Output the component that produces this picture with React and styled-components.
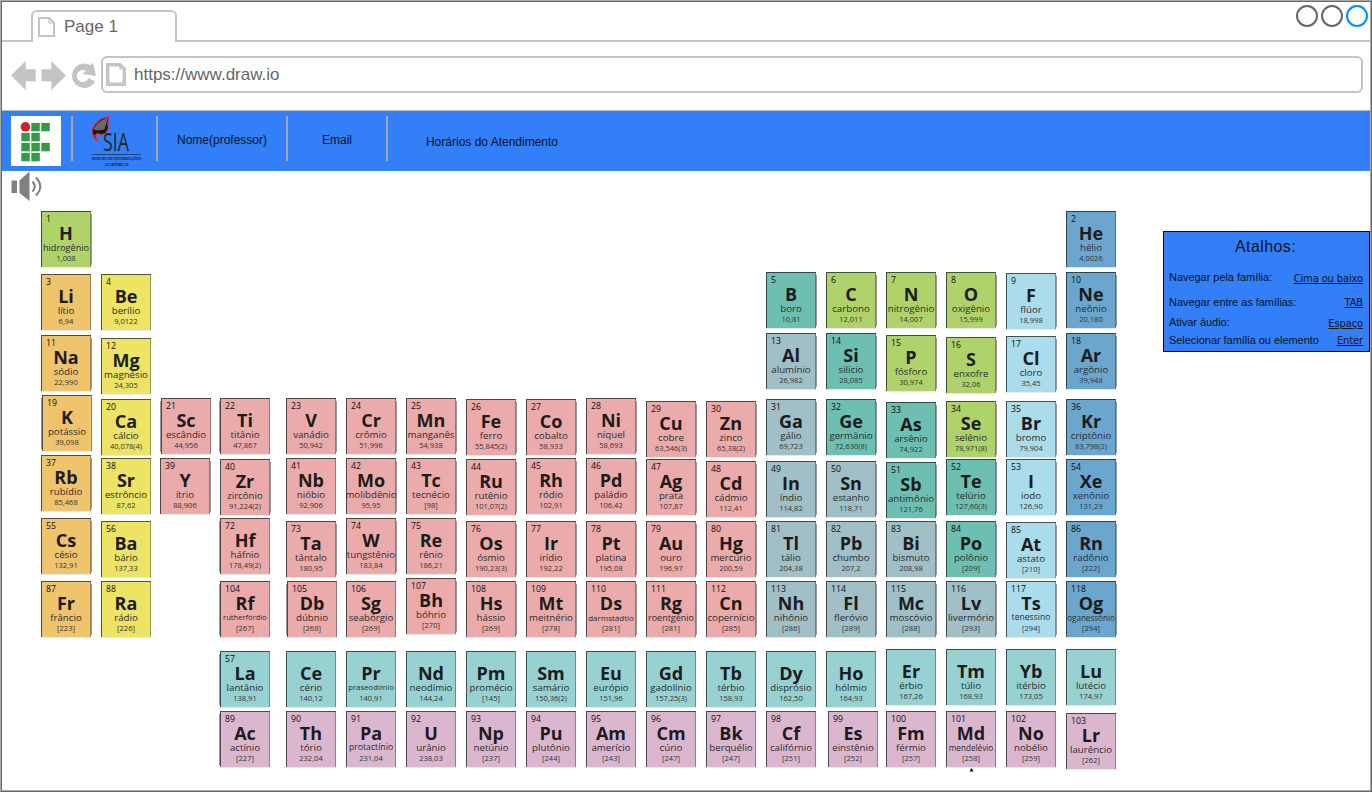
import React from "react";
import styled, { createGlobalStyle } from "styled-components";

const GlobalStyle = createGlobalStyle`
  * { box-sizing: border-box; }
  body { margin: 0; background: #fff; font-family: "Liberation Sans", Arial, sans-serif; }
`;

const line = "#c4c4c4";

const Window = styled.div`
  width: 1372px;
  height: 792px;
  overflow: hidden;
  background: #fff;
  border: 1px solid #a9a9a9;
  border-right-color: #666;
  border-bottom-color: #666;
`;

const Inner = styled.div`
  height: 790px;
  border: 1px solid #666;
  border-right-color: #a9a9a9;
  border-bottom-color: #a9a9a9;
`;

const TabStrip = styled.div`
  display: flex;
  justify-content: space-between;
  align-items: flex-end;
  height: 40px;
  padding-left: 29px;
  border-bottom: 2px solid ${line};
`;

const Tab = styled.div`
  display: flex;
  align-items: center;
  width: 146px;
  height: 32px;
  margin-bottom: -2px;
  padding: 0 0 0 5px;
  gap: 9px;
  background: #fff;
  border: 2px solid ${line};
  border-bottom: 0;
  border-radius: 6px 6px 0 0;
  color: #666;
  font-size: 17px;
`;

const WindowButtons = styled.div`
  display: flex;
  align-self: flex-start;
  gap: 3px;
  padding: 3px 2px 0 0;
`;

const RoundButton = styled.span`
  width: 22px;
  height: 22px;
  border: 2px solid ${(p) => p.$color};
  border-radius: 50%;
`;

const AddressRow = styled.div`
  display: flex;
  align-items: flex-start;
  height: 69px;
  padding: 14px 7px 0 9px;
  border-bottom: 1px solid #b4b8c0;
`;

const NavIcons = styled.svg`
  width: 86px;
  height: 38px;
  margin-right: 4px;
`;

const AddressField = styled.div`
  display: flex;
  align-items: center;
  flex: 1;
  height: 37px;
  padding: 0 0 0 3px;
  gap: 8px;
  border: 2px solid ${line};
  border-radius: 6px;
  color: #666;
  font-size: 17px;
`;

const Header = styled.header`
  display: flex;
  height: 60px;
  padding: 5px 0 0 9px;
  background: #337ff7;
`;

const Divider = styled.span`
  width: 2px;
  height: 45px;
  margin-left: ${(p) => p.$before}px;
  background: #a5a5ab;
`;

const HeaderLink = styled.span`
  width: ${(p) => p.$width}px;
  padding-top: ${(p) => p.$drop || 17}px;
  text-align: center;
  font-size: 12px;
  line-height: 14px;
  color: #0b1320;
`;

const SoundBar = styled.div`
  height: 40px;
  padding-left: 8px;
`;

const Content = styled.main`
  display: flex;
  align-items: flex-start;
  padding-left: 39px;
`;

const Family = styled.div`
  flex: none;
  display: flex;
  flex-direction: column;
  width: 50px;
  margin-left: ${(p) => p.$gap}px;
`;

const Cell = styled.div`
  position: relative;
  width: 50px;
  height: 56px;
  margin-top: ${(p) => p.$gap}px;
  margin-left: ${(p) => p.$shift}px;
  border: solid rgba(20, 30, 30, 0.72);
  border-width: 1px 0 0 1px;
  box-shadow: inset -1px 0 0 rgba(30, 40, 40, 0.4), 0 1px 0 rgba(0, 0, 0, 0.09);
  background: ${(p) => p.$color};
  color: #1c1c1c;
  font-family: "Open Sans", "Noto Sans", sans-serif;
  text-align: center;
  white-space: nowrap;

  &::after {
    content: "";
    display: ${(p) => (p.$back ? "block" : "none")};
    position: absolute;
    top: 2px;
    bottom: 2px;
    ${(p) => (p.$back === "left" ? "left: -2px;" : "right: -1px;")}
    width: 1px;
    background: #999;
  }
`;

const AtomicNumber = styled.div`
  height: 12px;
  padding: 2px 0 0 4px;
  text-align: left;
  font-size: 8.7px;
  line-height: 11px;
  font-weight: 500;
  color: #0c0c0c;
`;

const Symbol = styled.div`
  height: 18px;
  font-size: 18px;
  line-height: 18px;
  font-weight: 700;
  margin-left: -1px;
`;

const Name = styled.div`
  display: flex;
  justify-content: center;
  height: 11px;
  margin: 0 -4px 0 -5px;
  font-size: ${(p) => p.$size}px;
  line-height: 11px;
  color: #2a2e2e;
`;

const Mass = styled.div`
  margin-left: -1px;
  font-size: 7.5px;
  line-height: 10px;
  color: #303434;
`;

const Mark = styled.svg`
  width: 5px;
  height: 4px;
  margin: 1px auto 0 23px;
`;

const Shortcuts = styled.aside`
  flex: none;
  width: 207px;
  height: 121px;
  margin: 20px 0 0 47px;
  padding: 5px 6px 0 5px;
  border: 1px solid #000;
  background: #337ff7;
  color: #0b1320;
`;

const ShortcutsTitle = styled.h2`
  margin: 0 0 15px;
  padding-right: 1px;
  font-size: 16px;
  font-weight: 400;
  line-height: 19px;
  letter-spacing: 0.4px;
  text-align: center;
`;

const Shortcut = styled.div`
  display: flex;
  justify-content: space-between;
  height: ${(p) => p.$height}px;
  font-size: 11px;
  line-height: 13px;
  letter-spacing: -0.04px;
  white-space: nowrap;
`;

const Key = styled.span`
  padding-top: ${(p) => p.$drop}px;
  font-family: "DejaVu Sans Condensed", "DejaVu Sans", sans-serif;
  font-stretch: condensed;
  font-size: 11px;
  letter-spacing: -0.1px;
  text-decoration: underline;
`;

const SiaMark = styled.svg`
  width: 52px;
  height: 52px;
  margin-left: 18px;
  overflow: visible;
`;

const colors = {
  g: "#afd26b", o: "#efc46c", y: "#ede466", p: "#ebabab", t: "#6dbfb2",
  a: "#a1bfc6", l: "#aadceb", b: "#6ba6cf", c: "#98d1d2", m: "#dbb7cf",
};

// Element: colour, top, number, symbol, name, mass, options
const families = [
  { x: 41, items: [
    ["g", 211, 1, "H", "hidrogênio", "1,008", { size: 9.1, back: "right" }],
    ["o", 274, 3, "Li", "lítio", "6,94"],
    ["o", 335, 11, "Na", "sódio", "22,990", { back: "right" }],
    ["o", 395, 19, "K", "potássio", "39,098", { shift: 1, back: "left" }],
    ["o", 455, 37, "Rb", "rubídio", "85,468", { back: "right" }],
    ["o", 518, 55, "Cs", "césio", "132,91", { back: "right" }],
    ["o", 581, 87, "Fr", "frâncio", "[223]", { back: "right" }]] },
  { x: 101, items: [
    ["y", 274, 4, "Be", "berílio", "9,0122"],
    ["y", 338, 12, "Mg", "magnésio", "24,305"],
    ["y", 399, 20, "Ca", "cálcio", "40,078(4)"],
    ["y", 458, 38, "Sr", "estrôncio", "87,62"],
    ["y", 521, 56, "Ba", "bário", "137,33"],
    ["y", 581, 88, "Ra", "rádio", "[226]"]] },
  { x: 160, items: [
    ["p", 398, 21, "Sc", "escândio", "44,956", { shift: 1, back: "left" }],
    ["p", 458, 39, "Y", "ítrio", "88,906", { back: "right" }]] },
  { x: 219, items: [
    ["p", 398, 22, "Ti", "titânio", "47,867", { shift: 1, back: "left" }],
    ["p", 459, 40, "Zr", "zircônio", "91,224(2)", { shift: 1, back: "right" }],
    ["p", 518, 72, "Hf", "háfnio", "178,49(2)", { shift: 1, back: "left" }],
    ["p", 581, 104, "Rf", "rutherfórdio", "[267]", { shift: 1, size: 7.6, back: "left" }],
    ["c", 651, 57, "La", "lantânio", "138,91", { shift: 1, back: "left" }],
    ["m", 711, 89, "Ac", "actínio", "[227]", { shift: 1, back: "left" }]] },
  { x: 286, items: [
    ["p", 398, 23, "V", "vanádio", "50,942", { back: "right" }],
    ["p", 458, 41, "Nb", "nióbio", "92,906"],
    ["p", 521, 73, "Ta", "tântalo", "180,95", { back: "right" }],
    ["p", 581, 105, "Db", "dúbnio", "[268]", { shift: 1, back: "left" }],
    ["c", 651, "", "Ce", "cério", "140,12"],
    ["m", 711, 90, "Th", "tório", "232,04"]] },
  { x: 346, items: [
    ["p", 398, 24, "Cr", "crômio", "51,996", { back: "right" }],
    ["p", 458, 42, "Mo", "molibdênio", "95,95", { back: "right" }],
    ["p", 518, 74, "W", "tungstênio", "183,84", { back: "right" }],
    ["p", 581, 106, "Sg", "seabórgio", "[269]"],
    ["c", 651, "", "Pr", "praseodímio", "140,91", { size: 7.8 }],
    ["m", 711, 91, "Pa", "protactínio", "231,04", { size: 8.7 }]] },
  { x: 406, items: [
    ["p", 398, 25, "Mn", "manganês", "54,938", { back: "right" }],
    ["p", 458, 43, "Tc", "tecnécio", "[98]", { back: "right" }],
    ["p", 518, 75, "Re", "rênio", "186,21", { back: "right" }],
    ["p", 578, 107, "Bh", "bóhrio", "[270]", { back: "right" }],
    ["c", 651, "", "Nd", "neodímio", "144,24"],
    ["m", 711, 92, "U", "urânio", "238,03"]] },
  { x: 466, items: [
    ["p", 399, 26, "Fe", "ferro", "55,845(2)", { back: "right" }],
    ["p", 459, 44, "Ru", "rutênio", "101,07(2)", { back: "right" }],
    ["p", 521, 76, "Os", "ósmio", "190,23(3)", { back: "right" }],
    ["p", 581, 108, "Hs", "hássio", "[269]", { back: "right" }],
    ["c", 651, "", "Pm", "promécio", "[145]"],
    ["m", 711, 93, "Np", "netúnio", "[237]"]] },
  { x: 526, items: [
    ["p", 399, 27, "Co", "cobalto", "58,933", { back: "right" }],
    ["p", 458, 45, "Rh", "ródio", "102,91", { back: "right" }],
    ["p", 521, 77, "Ir", "irídio", "192,22", { back: "right" }],
    ["p", 581, 109, "Mt", "meitnério", "[278]", { back: "right" }],
    ["c", 651, "", "Sm", "samário", "150,36(2)"],
    ["m", 711, 94, "Pu", "plutônio", "[244]"]] },
  { x: 586, items: [
    ["p", 398, 28, "Ni", "níquel", "58,693", { back: "right" }],
    ["p", 458, 46, "Pd", "paládio", "106,42", { back: "right" }],
    ["p", 521, 78, "Pt", "platina", "195,08", { back: "right" }],
    ["p", 581, 110, "Ds", "darmstádtio", "[281]", { size: 8, back: "right" }],
    ["c", 651, "", "Eu", "európio", "151,96"],
    ["m", 711, 95, "Am", "amerício", "[243]"]] },
  { x: 646, items: [
    ["p", 401, 29, "Cu", "cobre", "63,546(3)", { back: "right" }],
    ["p", 459, 47, "Ag", "prata", "107,87", { back: "right" }],
    ["p", 521, 79, "Au", "ouro", "196,97", { back: "right" }],
    ["p", 581, 111, "Rg", "roentgênio", "[281]", { size: 9, back: "right" }],
    ["c", 651, "", "Gd", "gadolínio", "157,25(3)"],
    ["m", 711, 96, "Cm", "cúrio", "[247]"]] },
  { x: 706, items: [
    ["p", 401, 30, "Zn", "zinco", "65,38(2)", { back: "right" }],
    ["p", 461, 48, "Cd", "cádmio", "112,41", { back: "right" }],
    ["p", 521, 80, "Hg", "mercúrio", "200,59", { back: "right" }],
    ["p", 581, 112, "Cn", "copernício", "[285]", { back: "right" }],
    ["c", 651, "", "Tb", "térbio", "158,93"],
    ["m", 711, 97, "Bk", "berquélio", "[247]"]] },
  { x: 766, items: [
    ["t", 272, 5, "B", "boro", "10,81", { back: "right" }],
    ["a", 333, 13, "Al", "alumínio", "26,982", { back: "right" }],
    ["a", 399, 31, "Ga", "gálio", "69,723", { back: "right" }],
    ["a", 461, 49, "In", "índio", "114,82", { back: "right" }],
    ["a", 521, 81, "Tl", "tálio", "204,38", { back: "right" }],
    ["a", 581, 113, "Nh", "nihônio", "[286]", { back: "right" }],
    ["c", 651, "", "Dy", "disprósio", "162,50"],
    ["m", 711, 98, "Cf", "califórnio", "[251]"]] },
  { x: 826, items: [
    ["g", 272, 6, "C", "carbono", "12,011", { back: "right" }],
    ["t", 333, 14, "Si", "silício", "28,085", { back: "right" }],
    ["t", 399, 32, "Ge", "germânio", "72,630(8)", { back: "right" }],
    ["a", 461, 50, "Sn", "estanho", "118,71", { back: "right" }],
    ["a", 521, 82, "Pb", "chumbo", "207,2", { back: "right" }],
    ["a", 581, 114, "Fl", "fleróvio", "[289]", { back: "right" }],
    ["c", 651, "", "Ho", "hólmio", "164,93"],
    ["m", 711, 99, "Es", "einstênio", "[252]", { shift: 2 }]] },
  { x: 886, items: [
    ["g", 272, 7, "N", "nitrogênio", "14,007", { back: "right" }],
    ["g", 335, 15, "P", "fósforo", "30,974", { back: "right" }],
    ["t", 402, 33, "As", "arsênio", "74,922", { back: "right" }],
    ["t", 462, 51, "Sb", "antimônio", "121,76", { back: "right" }],
    ["a", 521, 83, "Bi", "bismuto", "208,98", { back: "right" }],
    ["a", 581, 115, "Mc", "moscóvio", "[288]", { back: "right" }],
    ["c", 649, "", "Er", "érbio", "167,26"],
    ["m", 711, 100, "Fm", "férmio", "[257]"]] },
  { x: 946, items: [
    ["g", 272, 8, "O", "oxigênio", "15,999", { back: "right" }],
    ["g", 337, 16, "S", "enxofre", "32,06", { back: "right" }],
    ["g", 401, 34, "Se", "selênio", "78,971(8)", { back: "right" }],
    ["t", 459, 52, "Te", "telúrio", "127,60(3)", { back: "right" }],
    ["t", 521, 84, "Po", "polônio", "[209]", { back: "right" }],
    ["a", 581, 116, "Lv", "livermório", "[293]", { back: "right" }],
    ["c", 649, "", "Tm", "túlio", "168,93"],
    ["m", 711, 101, "Md", "mendelévio", "[258]", { size: 8.2 }]] },
  { x: 1006, items: [
    ["l", 273, 9, "F", "flúor", "18,998", { back: "right" }],
    ["l", 336, 17, "Cl", "cloro", "35,45", { back: "right" }],
    ["l", 401, 35, "Br", "bromo", "79,904", { back: "right" }],
    ["l", 459, 53, "I", "iodo", "126,90", { back: "right" }],
    ["l", 522, 85, "At", "astato", "[210]", { back: "right" }],
    ["l", 581, 117, "Ts", "tenessino", "[294]", { size: 8.6, back: "right" }],
    ["c", 649, "", "Yb", "itérbio", "173,05"],
    ["m", 711, 102, "No", "nobélio", "[259]"]] },
  { x: 1066, items: [
    ["b", 211, 2, "He", "hélio", "4,0026"],
    ["b", 272, 10, "Ne", "neônio", "20,180", { back: "right" }],
    ["b", 333, 18, "Ar", "argônio", "39,948", { back: "right" }],
    ["b", 399, 36, "Kr", "criptônio", "83,798(2)", { back: "right" }],
    ["b", 459, 54, "Xe", "xenônio", "131,29", { back: "right" }],
    ["b", 521, 86, "Rn", "radônio", "[222]", { back: "right" }],
    ["b", 581, 118, "Og", "oganessônio", "[294]", { size: 8.1, back: "right" }],
    ["c", 649, "", "Lu", "lutécio", "174,97"],
    ["m", 713, 103, "Lr", "laurêncio", "[262]"]] },
];

function PageIcon({ width, height, stroke }) {
  const s = stroke / 2;
  return (
    <svg width={width} height={height} fill="none" stroke={line} strokeWidth={stroke}>
      <path d={`M${s} ${s}H${width - 6}L${width - s} 6V${height - s}H${s}Z`} />
      <path strokeWidth="1.2" d={`M${width - 6} ${s}V6H${width - s}`} />
    </svg>
  );
}

function IfLogo() {
  const squares = [[1, 0], [2, 0], [0, 1], [1, 1], [0, 2], [1, 2], [2, 2], [0, 3], [1, 3]];
  return (
    <svg width="50" height="50">
      <rect width="50" height="50" fill="#fff" />
      <circle cx="14.4" cy="10.8" r="4.8" fill="#cc2229" />
      {squares.map(([c, r]) => (
        <rect key={`${c}${r}`} x={10.3 + c * 10} y={6.9 + r * 10} width="8.5" height="8.4" fill="#359a47" />
      ))}
    </svg>
  );
}

function SiaLogo() {
  return (
    <SiaMark>
      <path d="M1.300 13.500L4.500 8L10 3L17.800.800L16.800 7L17.200 13L14.500 17.500L10 18.500L6 17.500L4.200 19.500L6.300 24.500L3.800 22.500L1.300 17Z" fill="#151515" stroke="#e3262e" strokeWidth="1.2" strokeLinejoin="round" />
      <path d="M2.200 13.500L6 8L11 4L17 1.600L13.500 13.500L7.500 14.500Z" fill="#686868" />
      <text x="12" y="35" fontFamily="Open Sans, sans-serif" fontSize="26" fontWeight="500" fill="#20242c" textLength="26" lengthAdjust="spacingAndGlyphs">SIA</text>
      <path d="M.5 38.500H50" stroke="#25436f" />
      <text x=".5" y="44.300" fontFamily="Liberation Serif, serif" fontSize="4.800" fontWeight="700" fontStyle="italic" fill="#10151f" textLength="49.500" lengthAdjust="spacingAndGlyphs">SISTEMA DE INFORMAÇÕES</text>
      <text x="13.500" y="49.800" fontFamily="Liberation Serif, serif" fontSize="4.800" fontWeight="700" fontStyle="italic" fill="#10151f" textLength="24" lengthAdjust="spacingAndGlyphs">ACADÊMICAS</text>
    </SiaMark>
  );
}

function Element({ item, gap }) {
  const [color, , number, symbol, name, mass, opts = {}] = item;
  return (
    <Cell $color={colors[color]} $gap={gap} $shift={opts.shift || 0} $back={opts.back}>
      <AtomicNumber>{number}</AtomicNumber>
      <Symbol>{symbol}</Symbol>
      <Name $size={opts.size || 9.7}>{name}</Name>
      <Mass>{mass}</Mass>
    </Cell>
  );
}

export default function App() {
  return (
    <Window>
      <GlobalStyle />
      <Inner>
        <TabStrip>
          <Tab><PageIcon width={17} height={20} stroke={2} />Page 1</Tab>
          <WindowButtons>
            <RoundButton $color="#666" />
            <RoundButton $color="#666" />
            <RoundButton $color="#008cff" />
          </WindowButtons>
        </TabStrip>
        <AddressRow>
          <NavIcons viewBox="11 56 86 38" fill="#c4c4c4">
            <path d="M11 75.500L25.700 61V69.300H35.700V81.300H25.700V90Z" />
            <path d="M66 75.500L51.300 61V69.300H41.500V81.300H51.300V90Z" />
            <path d="M95 81.500A12.200 12.200 0 1 1 90.500 65.200L93 62.500L96 76L82.500 74L86 70.800A6 6 0 1 0 88.500 78Z" />
          </NavIcons>
          <AddressField><PageIcon width={20} height={23} stroke={3.4} />https://www.draw.io</AddressField>
        </AddressRow>
        <Header>
          <IfLogo />
          <Divider $before={10} />
          <SiaLogo />
          <Divider $before={13} />
          <HeaderLink $width={128}>Nome(professor)</HeaderLink>
          <Divider $before={0} />
          <HeaderLink $width={98}>Email</HeaderLink>
          <Divider $before={0} />
          <HeaderLink $width={208} $drop={19}>Horários do Atendimento</HeaderLink>
        </Header>
        <SoundBar>
          <svg width="34" height="31" fill="#808080">
            <path d="M1.500 9.500H7V22H1.500ZM9.500 9.500L19.500.500V30L9.500 22Z" />
            <path d="M22.500 10.500Q27 15.500 22.500 20.500M26 6.500Q34.500 15.500 26 24.500" fill="none" stroke="#808080" strokeWidth="2" />
          </svg>
        </SoundBar>
        <Content>
          {families.map((family, i) => (
            <Family key={family.x} $gap={i ? family.x - families[i - 1].x - 50 : 0}>
              {family.items.map((item, j) => (
                <Element key={item[3]} item={item} gap={item[1] - (j ? family.items[j - 1][1] + 56 : 211)} />
              ))}
              {family.x === 946 && <Mark><path d="M2.500 0L4.500 3.500H.5Z" /></Mark>}
            </Family>
          ))}
          <Shortcuts>
            <ShortcutsTitle>Atalhos:</ShortcutsTitle>
            <Shortcut $height={25}>Navegar pela família:<Key $drop={1}>Cima ou baixo</Key></Shortcut>
            <Shortcut $height={20}>Navegar entre as famílias:<Key $drop={0}>TAB</Key></Shortcut>
            <Shortcut $height={18}>Ativar áudio:<Key $drop={1}>Espaço</Key></Shortcut>
            <Shortcut $height={14}>Selecionar família ou elemento<Key $drop={0}>Enter</Key></Shortcut>
          </Shortcuts>
        </Content>
      </Inner>
    </Window>
  );
}
